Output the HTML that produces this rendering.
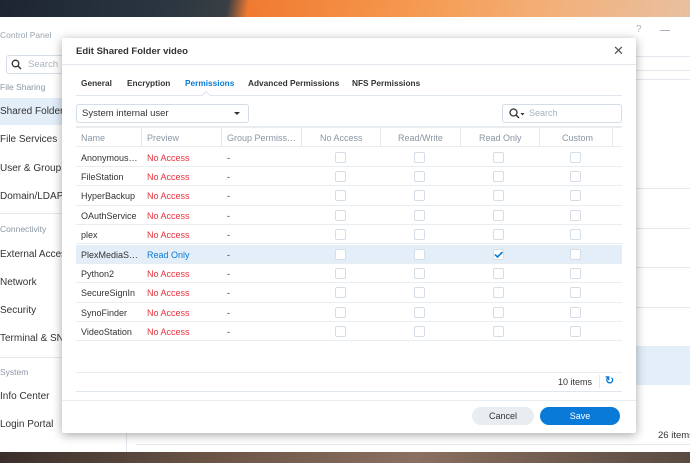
<!DOCTYPE html>
<html><head><style>
*{box-sizing:border-box;margin:0;padding:0}
body{width:690px;height:463px;overflow:hidden;position:relative;font-family:"Liberation Sans",sans-serif;font-size:9px;color:#333;background:#fff}
.abs{position:absolute;white-space:nowrap}
.wall{left:0;width:690px;background:linear-gradient(100deg,#1d2630 0%,#2b3640 25%,#3a3f44 33%,#f07a30 36%,#f59a50 60%,#f3b07a 80%,#e8c0a0 100%)}
.side div{position:absolute;left:0;white-space:nowrap}
.sec{color:#8a96a3;font-size:8.5px}
.it{font-size:10px;color:#333}
.dlg{left:62px;top:38px;width:574px;height:395px;background:#fff;box-shadow:0 2px 10px rgba(0,0,0,.35);border-radius:2px}
.row{position:absolute;left:14px;width:546px;height:19.4px;border-bottom:1px solid #e8edf2}
.row span{position:absolute;top:5px;font-size:9px;white-space:nowrap}
.cb{position:absolute;top:4px;width:11px;height:11px;border:1px solid #d5dde6;border-radius:2px;background:#fff}
.hd span{position:absolute;top:5px;color:#8a96a3;font-size:9px}
.vl{position:absolute;top:0;width:1px;height:19px;background:#e3e9ef}
.tab{font-size:8.3px;font-weight:bold;color:#333}
</style></head><body>
<div class="abs wall" style="top:0;height:17px"></div>
<div class="abs wall" style="top:452px;height:11px;background:linear-gradient(100deg,#3a2e2a 0%,#6a5446 30%,#8a7060 60%,#5a4a40 100%)"></div>
<div class="abs" style="left:0;top:17px;width:690px;height:435px;background:#fff"></div>
<div class="abs" style="left:126px;top:40px;width:1px;height:412px;background:#e3e9ef"></div>
<div class="abs" style="left:0;top:30px;color:#9aa5b0;font-size:8.5px">Control Panel</div>
<div class="abs" style="left:636px;top:24px;color:#aab3bd;font-size:10px">?</div>
<div class="abs" style="left:660px;top:30px;width:10px;height:1px;background:#aab3bd"></div>
<div class="abs" style="left:6px;top:55px;width:60px;height:19px;border:1px solid #d5dde6;border-radius:3px"></div>
<svg class="abs" style="left:11px;top:59px" width="11" height="11"><circle cx="4.5" cy="4.5" r="3.3" fill="none" stroke="#333" stroke-width="1.3"/><line x1="7" y1="7" x2="10" y2="10" stroke="#333" stroke-width="1.4"/></svg>
<div class="abs" style="left:28px;top:59px;color:#aab3bd;font-size:9.5px">Search</div>
<div class="abs" style="left:0;top:98px;width:62px;height:27px;background:#e3eef9"></div>
<div class="side">
<div class="sec" style="top:82px">File Sharing</div>
<div class="it" style="top:106px">Shared Folder</div>
<div class="it" style="top:134px">File Services</div>
<div class="it" style="top:163px">User &amp; Group</div>
<div class="it" style="top:191px">Domain/LDAP</div>
<div style="top:213px;width:62px;height:1px;background:#e3e9ef"></div>
<div class="sec" style="top:224px">Connectivity</div>
<div class="it" style="top:249px">External Access</div>
<div class="it" style="top:277px">Network</div>
<div class="it" style="top:305px">Security</div>
<div class="it" style="top:333px">Terminal &amp; SNMP</div>
<div style="top:357px;width:62px;height:1px;background:#e3e9ef"></div>
<div class="sec" style="top:367px">System</div>
<div class="it" style="top:391px">Info Center</div>
<div class="it" style="top:419px">Login Portal</div>
</div>
<div class="abs" style="left:636px;top:56px;width:54px;height:1px;background:#e3e9ef"></div>
<div class="abs" style="left:636px;top:70px;width:54px;height:1px;background:#e3e9ef"></div>
<div class="abs" style="left:636px;top:79px;width:54px;height:1px;background:#e3e9ef"></div>
<div class="abs" style="left:636px;top:188px;width:54px;height:1px;background:#e3e9ef"></div>
<div class="abs" style="left:636px;top:228px;width:54px;height:1px;background:#e3e9ef"></div>
<div class="abs" style="left:636px;top:267px;width:54px;height:1px;background:#e3e9ef"></div>
<div class="abs" style="left:636px;top:307px;width:54px;height:1px;background:#e3e9ef"></div>
<div class="abs" style="left:636px;top:346px;width:54px;height:39px;background:#e3eef9"></div>
<div class="abs" style="left:658px;top:430px;font-size:9.5px;color:#333">26 items</div>
<div class="abs" style="left:136px;top:444px;width:554px;height:1px;background:#e3e9ef"></div>

<div class="abs dlg">
 <div class="abs" style="left:14px;top:8px;font-size:9.5px;font-weight:bold;color:#333">Edit Shared Folder video</div>
 <div class="abs" style="left:551px;top:5px;font-size:13px;color:#555">✕</div>
 <div class="abs" style="left:0;top:26px;width:574px;height:1px;background:#e3e9ef"></div>
 <div class="abs tab" style="left:19px;top:40px">General</div>
 <div class="abs tab" style="left:65px;top:40px">Encryption</div>
 <div class="abs tab" style="left:123px;top:40px;color:#0a7ad8">Permissions</div>
 <div class="abs tab" style="left:186px;top:40px">Advanced Permissions</div>
 <div class="abs tab" style="left:290px;top:40px">NFS Permissions</div>
 <div class="abs" style="left:14px;top:57px;width:546px;height:1px;background:#dfe6ed"></div>
 <div class="abs" style="left:141px;top:54px;width:6px;height:6px;background:#fff;border-left:1px solid #dfe6ed;border-top:1px solid #dfe6ed;transform:rotate(45deg)"></div>
 <div class="abs" style="left:14px;top:66px;width:173px;height:19px;border:1px solid #d5dde6;border-radius:3px"></div>
 <div class="abs" style="left:20px;top:70px;font-size:9.5px;color:#333">System internal user</div>
 <div class="abs" style="left:172px;top:74px;border-left:3px solid transparent;border-right:3px solid transparent;border-top:3px solid #333"></div>
 <div class="abs" style="left:440px;top:66px;width:120px;height:19px;border:1px solid #d5dde6;border-radius:3px"></div>
 <svg class="abs" style="left:447px;top:70px" width="16" height="11"><circle cx="4.5" cy="4.5" r="3.5" fill="none" stroke="#333" stroke-width="1.3"/><line x1="7" y1="7" x2="10" y2="10" stroke="#333" stroke-width="1.4"/><path d="M11.5 5h4l-2 2.5z" fill="#333"/></svg>
 <div class="abs" style="left:467px;top:70px;color:#aab3bd;font-size:9px">Search</div>
 <div class="abs" style="left:14px;top:88px;width:546px;height:2px;background:#e8edf2"></div>
 <div class="row hd" style="top:90px">
  <span style="left:5px">Name</span><span style="left:71px">Preview</span><span style="left:151px">Group Permiss…</span>
  <span style="left:244px">No Access</span><span style="left:322px">Read/Write</span><span style="left:403px">Read Only</span><span style="left:486px">Custom</span>
  <div class="vl" style="left:65px"></div><div class="vl" style="left:145px"></div><div class="vl" style="left:225px"></div><div class="vl" style="left:304px"></div><div class="vl" style="left:384px"></div><div class="vl" style="left:463px"></div><div class="vl" style="left:536px"></div>
 </div>
 <div id="rows"></div>
 <div class="abs" style="left:14px;top:334px;width:546px;height:1px;background:#e8edf2"></div>
 <div class="abs" style="left:496px;top:339px;font-size:9px;color:#333">10 items</div>
 <div class="abs" style="left:537px;top:337px;width:1px;height:13px;background:#e3e9ef"></div>
 <div class="abs" style="left:543px;top:336px;font-size:11px;font-weight:bold;color:#0a7ad8">↻</div>
 <div class="abs" style="left:14px;top:353px;width:546px;height:1px;background:#dfe6ed"></div>
 <div class="abs" style="left:0;top:362px;width:574px;height:1px;background:#e8edf2"></div>
 <div class="abs" style="left:410px;top:369px;width:62px;height:18px;border-radius:9px;background:#e8edf2;color:#333;font-size:9px;text-align:center;line-height:18px">Cancel</div>
 <div class="abs" style="left:478px;top:369px;width:80px;height:18px;border-radius:9px;background:#0a7ad8;color:#fff;font-size:9px;text-align:center;line-height:18px">Save</div>
</div>
<script>
var n=["Anonymous…","FileStation","HyperBackup","OAuthService","plex","PlexMediaS…","Python2","SecureSignIn","SynoFinder","VideoStation"];
var h="";
for(var i=0;i<10;i++){var sel=i==5;var t=109.5+i*19.4;
h+='<div class="row" style="top:'+t+'px;'+(sel?'background:#e3eef9':'')+'"><span style="left:5px">'+n[i]+'</span><span style="left:71px;color:'+(sel?'#0a7ad8':'#e8323c')+'">'+(sel?'Read Only':'No Access')+'</span><span style="left:151px">-</span>';
[259,338,417,494].forEach(function(x,j){h+='<div class="cb" style="left:'+x+'px">'+(sel&&j==2?'<svg width="9" height="9" style="position:absolute;left:0;top:0"><path d="M1 4.5l2.5 2.5 5-5" fill="none" stroke="#0a7ad8" stroke-width="1.6"/></svg>':'')+'</div>';});
h+='</div>';}
document.getElementById("rows").innerHTML=h;
</script>
</body></html>
